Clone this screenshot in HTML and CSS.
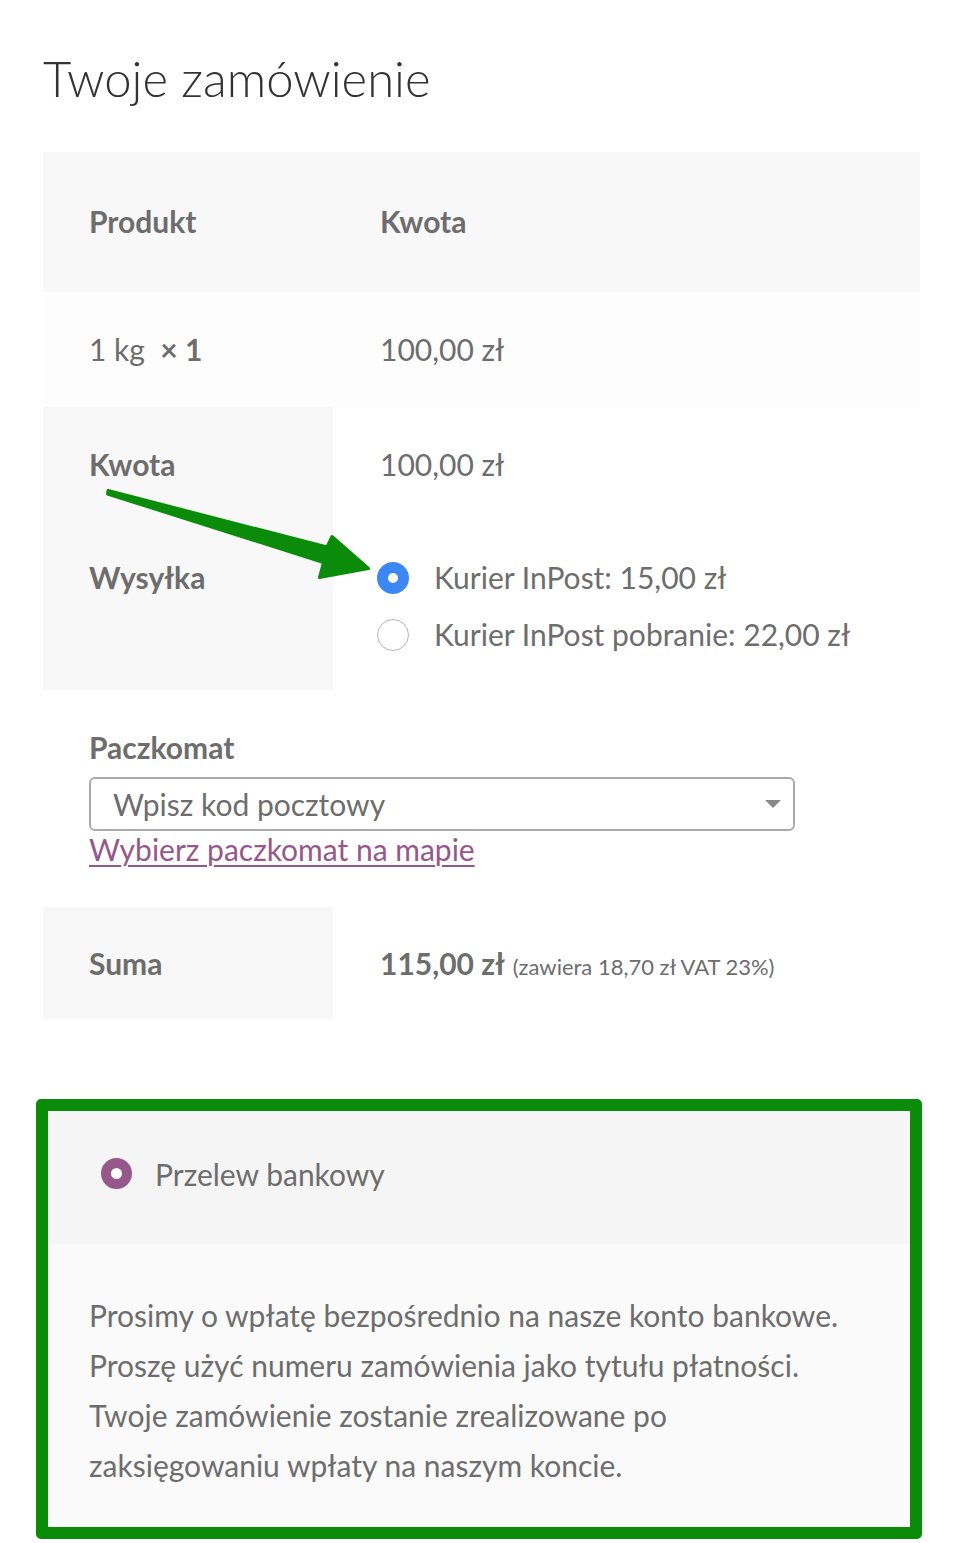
FILE: index.html
```html
<!DOCTYPE html>
<html lang="pl">
<head>
<meta charset="utf-8">
<title>Twoje zamówienie</title>
<link rel="stylesheet" href="styles.css">
</head>
<body>
<div class="page">
  <h2 class="title">Twoje zamówienie</h2>
  <div class="review">
    <table class="order">
      <thead>
        <tr><th class="c1">Produkt</th><th class="c2">Kwota</th></tr>
      </thead>
      <tbody>
        <tr class="item"><td class="c1">1 kg&nbsp; <strong>×&nbsp;1</strong></td><td class="c2">100,00 zł</td></tr>
      </tbody>
      <tfoot>
        <tr class="subtotal"><th class="c1">Kwota</th><td class="c2">100,00 zł</td></tr>
        <tr class="shipping">
          <th class="c1">Wysyłka</th>
          <td class="c2 ship-cell">
            <ul class="methods">
              <li><span class="radio radio-on"></span><span>Kurier InPost: 15,00 zł</span></li>
              <li><span class="radio"></span><span>Kurier InPost pobranie: 22,00 zł</span></li>
            </ul>
          </td>
        </tr>
        <tr class="locker">
          <td colspan="2">
            <div class="locker-label">Paczkomat</div>
            <div class="select"><span>Wpisz kod pocztowy</span><span class="caret"></span></div>
            <a class="map-link" href="#">Wybierz paczkomat na mapie</a>
          </td>
        </tr>
        <tr class="total"><th class="c1">Suma</th><td class="c2"><strong>115,00 zł</strong> <small>(zawiera 18,70 zł VAT 23%)</small></td></tr>
      </tfoot>
    </table>
    <svg class="arrow" width="300" height="110" viewBox="100 480 300 110" aria-hidden="true">
      <path d="M108 490.5 L327 547 L332 536.5 L368.5 568.5 L319.5 577.5 L323.5 562.5 L107.5 494 Z" fill="#0a8c0a" stroke="#0a8c0a" stroke-width="3" stroke-linejoin="round"/>
    </svg>
  </div>

  <div class="payment">
    <div class="method"><span class="radio-pay"></span><span>Przelew bankowy</span></div>
    <div class="payment-box">
      <p>Prosimy o wpłatę bezpośrednio na nasze konto bankowe.<br>Proszę użyć numeru zamówienia jako tytułu płatności.<br>Twoje zamówienie zostanie zrealizowane po<br>zaksięgowaniu wpłaty na naszym koncie.</p>
    </div>
  </div>
</div>
</body>
</html>
```
FILE: styles.css
```css
* { box-sizing: border-box; }
html, body { margin: 0; padding: 0; background: #fff; }
body {
  font-family: Lato, "Open Sans", sans-serif;
  color: #6d6d6d;
  font-size: 30px;
}
.page {
  padding: 49px 40px 0 43px;
  width: 960px;
}
.title {
  margin: 0 0 45px;
  font-size: 49px;
  line-height: 58px;
  font-weight: 300;
  color: #333;
}
.review { position: relative; }
.order {
  width: 877px;
  border-collapse: collapse;
  border-spacing: 0;
  table-layout: fixed;
}
.order th, .order td {
  text-align: left;
  line-height: 45px;
  padding: 34px 0;
  vertical-align: top;
}
.order th { font-weight: 700; }
.order .c1 { width: 290px; padding-left: 46px; }
.order .c2 { padding-left: 47px; }
.order thead th { background: #f8f8f8; padding-top: 47px; padding-bottom: 48px; }
.order .item td { background: #fdfdfd; padding-top: 35px; padding-bottom: 35px; }
.order tfoot th { background: #f8f8f8; }
.order .subtotal th, .order .subtotal td { padding-top: 35px; padding-bottom: 33px; }
.order .shipping th, .order .shipping td { padding-top: 35px; padding-bottom: 33px; }
.order strong { font-weight: 700; }

.methods { list-style: none; margin: 0; padding: 0; }
.methods li { display: flex; align-items: center; gap: 25px; margin-left: -3px; height: 45px; }
.methods li + li { margin-top: 12px; }
.radio {
  width: 32px; height: 32px;
  border-radius: 50%;
  border: 1.5px solid #b5b5b5;
  background: #fff;
  flex: none;
}
.radio-on { border: 11px solid #3c87f3; }

.order .locker td { padding: 35px 46px 40px; }
.locker-label { font-weight: 700; line-height: 45px; height: 45px; }
.select {
  margin-top: 7px;
  width: 706px;
  height: 54px;
  border: 2px solid #aaa;
  border-radius: 6px;
  display: flex;
  align-items: center;
  justify-content: space-between;
  padding: 0 12px 0 22px;
  line-height: 40px;
}
.caret {
  width: 0; height: 0;
  border-left: 8px solid transparent;
  border-right: 8px solid transparent;
  border-top: 8px solid #888;
}
.map-link {
  display: block;
  color: #96588a;
  text-decoration: underline;
  text-underline-offset: 4px;
  text-decoration-thickness: 2px;
  line-height: 36px;
  height: 36px;
}
.order .total th, .order .total td { padding-top: 34px; padding-bottom: 33px; height: 112px; }
.order .total small { font-size: 22px; line-height: 20px; }

.arrow {
  position: absolute;
  left: 57px;
  top: 328px;
  pointer-events: none;
}

.payment {
  margin: 80px 0 0 -7px;
  width: 886px;
  border: 12px solid #0a8c0a;
  border-radius: 5px;
}
.method {
  background: #f5f5f5;
  height: 133px;
  display: flex;
  align-items: center;
  padding: 0 0 8px 53px;
  gap: 23px;
}
.radio-pay {
  width: 31px; height: 31px;
  border-radius: 50%;
  border: 10.5px solid #96588a;
  background: #fff;
  flex: none;
}
.payment-box {
  background: #fafafa;
  margin-right: 6px;
  padding: 46px 41px 37px;
}
.payment-box p { margin: 0; line-height: 50px; }
```
